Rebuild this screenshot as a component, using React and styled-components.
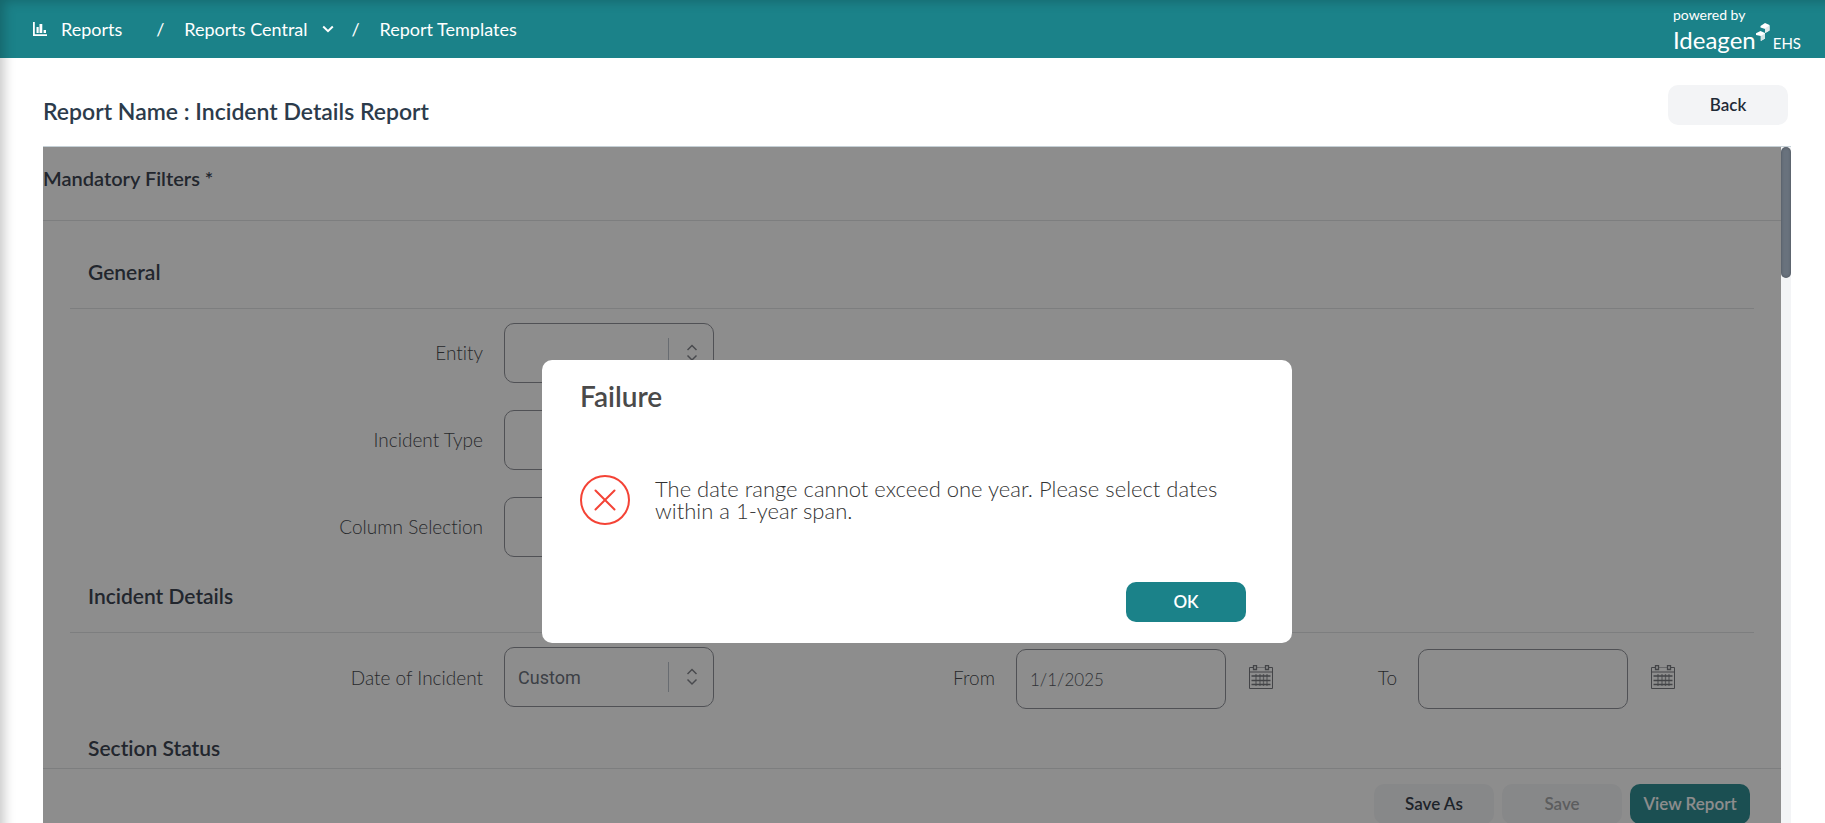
import React from 'react';
import styled, { createGlobalStyle, css } from 'styled-components';

const teal = '#1b8289';
const line = '#dfe1e3';

const GlobalStyle = createGlobalStyle`
  *, *::before, *::after { box-sizing: border-box; }
  body { margin: 0; background: #fff; overflow: hidden; font-variant-ligatures: none; }
  body, button, input { font-family: Lato, "Liberation Sans", sans-serif; }
  h1, h2, h3, p { margin: 0; }
`;

const Page = styled.div`
  position: relative;
  display: flex;
  flex-direction: column;
  height: 100vh;
  overflow: hidden;

  &::after {
    content: '';
    position: absolute;
    inset: 0 -20px -20px 0;
    pointer-events: none;
    box-shadow: inset 4px 1px 12px rgba(0, 0, 0, 0.22);
  }
`;

const TopBar = styled.header`
  display: flex;
  flex: none;
  justify-content: space-between;
  height: 58px;
  padding: 0 24px 0 33px;
  background: ${teal};
  color: #fff;
`;

const Crumbs = styled.nav`
  display: flex;
  align-items: center;
  font-size: 18px;
  line-height: 24px;
`;

const Crumb = styled.a`
  display: flex;
  align-items: center;
  gap: 14px;
  color: inherit;
  text-decoration: none;
`;

const Slash = styled.span`
  width: 8px;
  margin: 0 20px 0 ${(p) => p.$before}px;
  text-align: center;
`;

const Brand = styled.div`
  display: flex;
  flex-direction: column;
  padding-top: 7px;
`;

const Powered = styled.span`
  font-size: 14px;
  line-height: 16px;
`;

const BrandName = styled.div`
  display: flex;
  align-items: flex-end;
  font-size: 24px;
  line-height: 34px;
  svg { align-self: flex-start; }
`;

const Product = styled.span`
  margin-left: 3px;
  font-size: 15px;
  line-height: 27px;
`;

const Main = styled.main`
  display: flex;
  flex: 1;
  flex-direction: column;
  min-height: 0;
  padding: 0 34px 0 43px;
`;

const TitleRow = styled.div`
  display: flex;
  align-items: center;
  justify-content: space-between;
  flex: none;
  height: 89px;
  padding: 18px 3px 0 0;
  border-bottom: 1px solid #c5d0d6;
`;

const Title = styled.h1`
  color: #2c3b4b;
  font-size: 23px;
  font-weight: 600;
  line-height: 32px;
`;

const Button = styled.button`
  width: 120px;
  height: 40px;
  flex: none;
  padding: 0;
  border: 0;
  border-radius: 10px;
  background: #f3f4f6;
  color: #1f2a37;
  font-size: 17px;
  font-weight: 600;
  line-height: 24px;
  &:disabled { color: #9c9ea1; }
  ${(p) => p.$primary && css`
    background: ${teal};
    color: #fff;
  `}
  ${(p) => p.$raised && css`
    align-self: flex-start;
    margin-top: 9px;
  `}
`;

const Region = styled.div`
  position: relative;
  display: flex;
  flex: 1;
  min-height: 0;
`;

const Panel = styled.div`
  position: relative;
  display: flex;
  flex: 1;
  flex-direction: column;
  min-width: 0;
  background: #fff;
  &::after {
    content: '';
    position: absolute;
    inset: 0;
    background: rgba(28, 28, 28, 0.5);
  }
`;

const Track = styled.div`
  width: 10px;
  background: #f3f4f6;
`;

const Thumb = styled.div`
  height: 131px;
  border-radius: 5px;
  background: #69727d;
  box-shadow: inset 0 0 3px rgba(0, 0, 0, 0.3);
`;

const PanelTitle = styled.h2`
  flex: none;
  height: 74px;
  padding-top: 15px;
  border-bottom: 1px solid ${line};
  color: #28303f;
  font-size: 20px;
  font-weight: 600;
  line-height: 32px;
`;

const Filters = styled.form`
  flex: 1;
  min-height: 0;
  overflow: hidden;
  padding: 12px 27px 0;
`;

const Group = styled.section`
  display: flex;
  flex-direction: column;
`;

const GroupTitle = styled.h3`
  height: 76px;
  padding: 23px 0 0 18px;
  border-bottom: 1px solid ${line};
  color: #28303f;
  font-size: 21px;
  font-weight: 600;
  line-height: 32px;
`;

const Rows = styled.div`
  display: grid;
  gap: 27px;
  padding-top: 14px;
`;

const Row = styled.div`
  display: grid;
  grid-template-columns: 434fr 210px 302fr 257px 145fr 257px 79fr;
`;

const Label = styled.label`
  align-self: center;
  padding-right: 21px;
  color: #33363b;
  font-size: 19px;
  font-weight: 300;
  line-height: 24px;
  text-align: right;
`;

const SelectBox = styled.div`
  position: relative;
  height: 60px;
  svg {
    position: absolute;
    top: 15px;
    right: 14px;
    pointer-events: none;
  }
`;

const fieldStyle = css`
  width: 210px;
  height: 60px;
  padding: 0 13px;
  border: 1px solid #84868e;
  border-radius: 10px;
  background: #fff;
`;

const Select = styled.select`
  ${fieldStyle}
  appearance: none;
  color: #5d6470;
  font-family: Roboto, sans-serif;
  font-size: 18px;
  opacity: 1;
`;

const DateBox = styled.div`
  display: flex;
  gap: 23px;
  padding-top: 2px;
`;

const DateInput = styled.input`
  ${fieldStyle}
  color: #454a52;
  font-size: 17px;
  font-weight: 300;
`;

const IconButton = styled.button`
  display: block;
  width: 24px;
  height: 24px;
  margin-top: 16px;
  padding: 0;
  border: 0;
  background: none;
`;

const Footer = styled.footer`
  display: flex;
  flex: none;
  justify-content: flex-end;
  gap: 8px;
  height: 55px;
  padding: 15px 31px 0 0;
  border-top: 1px solid ${line};
  overflow: hidden;
`;

const DialogLayer = styled.div`
  position: absolute;
  inset: 0;
  display: flex;
  align-items: flex-start;
  justify-content: center;
  padding-top: 213px;
`;

const Dialog = styled.div`
  width: 750px;
  padding: 18px 46px 21px 38px;
  border-radius: 10px;
  background: #fff;
  color: #4a4a4a;
`;

const DialogTitle = styled.h2`
  font-size: 28px;
  font-weight: 600;
  line-height: 36px;
`;

const Message = styled.div`
  display: flex;
  align-items: center;
  gap: 25px;
  padding: 61px 0 57px;
  svg { flex: none; }
`;

const MessageText = styled.p`
  max-width: 580px;
  color: #333;
  font-size: 22px;
  font-weight: 300;
  line-height: 22px;
`;

const Actions = styled.div`
  display: flex;
  justify-content: flex-end;
`;

const ChartIcon = () => (
  <svg width="14" height="14" viewBox="0 0 14 14" fill="#fff" aria-hidden="true">
    <path d="M0 0h1.800v12.200H14V14H0zM3.500 5h2.200v6H3.500zM6.500 2h2.800v9H6.500zM10.600 8h2.400v3h-2.400z" />
  </svg>
);

const ChevronDown = () => (
  <svg width="12" height="8" viewBox="0 0 12 8" fill="none" stroke="#fff" strokeWidth="2" aria-hidden="true">
    <path d="M1.200 1.500 6 6.200 10.800 1.500" />
  </svg>
);

const BrandMark = () => (
  <svg width="14" height="19" viewBox="0 0 14 19" aria-hidden="true">
    <path d="M4.500 3 9 0l4.500 2v5.500L9.200 10V6L4.500 4.500z" fill="#fff" />
    <path d="M9.200 5.200 13.500 2.500v5L9.200 10z" fill="#dfeaeb" />
    <path d="M0 10.200 4.500 8 9 10v5.500L4.800 18v-5L0 12z" fill="#fff" />
    <path d="M4.800 13 9 10.500v5L4.800 18z" fill="#d3e4e5" />
  </svg>
);

const Arrows = () => (
  <svg width="32" height="30" viewBox="0 0 32 30" fill="none" aria-hidden="true">
    <path d="M.5 0v30" stroke="#b4bcc6" />
    <path d="M19.500 12 24 7.500 28.500 12M19.500 17.500 24 22 28.500 17.500" stroke="#777980" strokeWidth="1.500" />
  </svg>
);

const CalendarIcon = () => (
  <svg width="24" height="24" viewBox="0 0 24 24" fill="none" stroke="#6a6c72" aria-hidden="true">
    <path d="M4 2.500H.5v21h23v-21H20" />
    <path d="M8 2.500h8M1 6.500h22M1 7.500h22" strokeOpacity=".5" />
    <path d="M4.500.5h3v4h-3zM16.500.5h3v4h-3z" strokeWidth="1.300" />
    <path d="M2.500 11h19M2.500 15.500h19M2.500 19.500h19" strokeWidth="1.300" />
    <path d="M7 9v12M11 9v12M14.500 9v12M18 9v12" strokeOpacity=".7" strokeWidth="1.300" />
  </svg>
);

const ErrorIcon = () => (
  <svg width="50" height="50" viewBox="0 0 50 50" fill="none" stroke="#f44336" strokeWidth="2" strokeLinecap="round" aria-hidden="true">
    <circle cx="25" cy="25" r="24" />
    <path d="m15.500 15.500 19 19m0-19-19 19" />
  </svg>
);

const SelectField = ({ id, label, value = '' }) => (
  <>
    <Label htmlFor={id}>{label}</Label>
    <SelectBox>
      <Select id={id} defaultValue={value}>
        <option value={value}>{value}</option>
      </Select>
      <Arrows />
    </SelectBox>
  </>
);

const DateField = ({ id, label, value = '' }) => (
  <>
    <Label htmlFor={id}>{label}</Label>
    <DateBox>
      <DateInput id={id} type="text" defaultValue={value} />
      <IconButton type="button" aria-label={`${label} calendar`}><CalendarIcon /></IconButton>
    </DateBox>
  </>
);

export default function App() {
  return (
    <Page>
      <GlobalStyle />
      <TopBar>
        <Crumbs aria-label="Breadcrumb">
          <Crumb href="#reports"><ChartIcon />Reports</Crumb>
          <Slash $before={34}>/</Slash>
          <Crumb href="#central">Reports Central<ChevronDown /></Crumb>
          <Slash $before={18}>/</Slash>
          <Crumb href="#templates">Report Templates</Crumb>
        </Crumbs>
        <Brand>
          <Powered>powered by</Powered>
          <BrandName>Ideagen<BrandMark /><Product>EHS</Product></BrandName>
        </Brand>
      </TopBar>
      <Main>
        <TitleRow>
          <Title>Report Name : Incident Details Report</Title>
          <Button type="button" $raised>Back</Button>
        </TitleRow>
        <Region>
          <Panel>
            <PanelTitle>Mandatory Filters *</PanelTitle>
            <Filters>
              <Group>
                <GroupTitle>General</GroupTitle>
                <Rows>
                  <Row><SelectField id="entity" label="Entity" /></Row>
                  <Row><SelectField id="type" label="Incident Type" /></Row>
                  <Row><SelectField id="columns" label="Column Selection" /></Row>
                </Rows>
              </Group>
              <Group>
                <GroupTitle>Incident Details</GroupTitle>
                <Rows>
                  <Row>
                    <SelectField id="date" label="Date of Incident" value="Custom" />
                    <DateField id="from" label="From" value="1/1/2025" />
                    <DateField id="to" label="To" />
                  </Row>
                </Rows>
              </Group>
              <Group>
                <GroupTitle>Section Status</GroupTitle>
              </Group>
            </Filters>
            <Footer>
              <Button type="button">Save As</Button>
              <Button type="button" disabled>Save</Button>
              <Button type="button" $primary>View Report</Button>
            </Footer>
          </Panel>
          <Track><Thumb /></Track>
          <DialogLayer>
            <Dialog role="alertdialog" aria-labelledby="dialog-title" aria-describedby="dialog-text">
              <DialogTitle id="dialog-title">Failure</DialogTitle>
              <Message>
                <ErrorIcon />
                <MessageText id="dialog-text">
                  The date range cannot exceed one year. Please select dates within a 1-year span.
                </MessageText>
              </Message>
              <Actions><Button type="button" $primary>OK</Button></Actions>
            </Dialog>
          </DialogLayer>
        </Region>
      </Main>
    </Page>
  );
}
